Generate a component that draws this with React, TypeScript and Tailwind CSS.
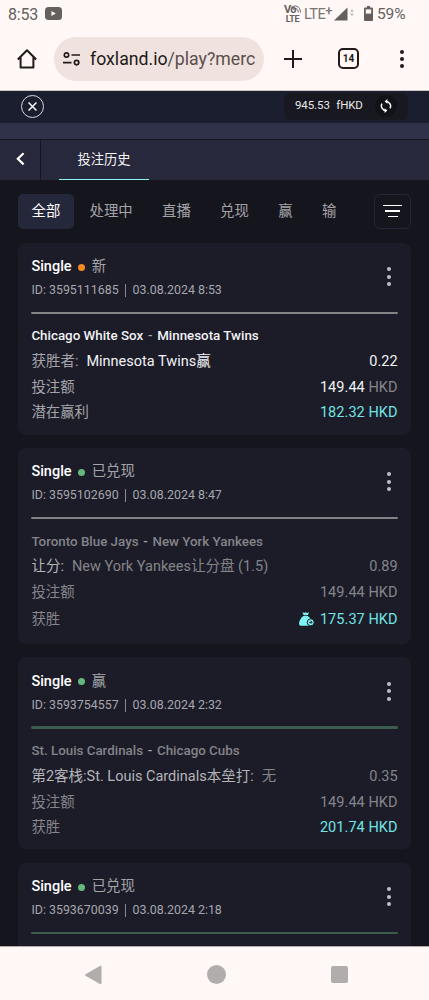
import React from "react";
import clsx from "clsx";

type Bet = {
  id: string;
  date: string;
  status: string;
  dot: string;
  line: string;
  details?: {
    teams: [string, string];
    market: string;
    pick: string;
    odds: string;
    payoutLabel: string;
    payout: string;
  };
  open?: boolean;
  cashout?: boolean;
};

const bets: Bet[] = [
  {
    id: "3595111685",
    date: "03.08.2024 8:53",
    status: "新",
    dot: "bg-[#f58a20]",
    line: "bg-[#838387]",
    details: {
      teams: ["Chicago White Sox", "Minnesota Twins"],
      market: "获胜者:",
      pick: "Minnesota Twins赢",
      odds: "0.22",
      payoutLabel: "潜在赢利",
      payout: "182.32",
    },
    open: true,
  },
  {
    id: "3595102690",
    date: "03.08.2024 8:47",
    status: "已兑现",
    dot: "bg-[#63b97c]",
    line: "bg-[#838387]",
    details: {
      teams: ["Toronto Blue Jays", "New York Yankees"],
      market: "让分:",
      pick: "New York Yankees让分盘 (1.5)",
      odds: "0.89",
      payoutLabel: "获胜",
      payout: "175.37",
    },
    cashout: true,
  },
  {
    id: "3593754557",
    date: "03.08.2024 2:32",
    status: "赢",
    dot: "bg-[#63b97c]",
    line: "bg-[#3b5c4c]",
    details: {
      teams: ["St. Louis Cardinals", "Chicago Cubs"],
      market: "第2客栈:St. Louis Cardinals本垒打:",
      pick: "无",
      odds: "0.35",
      payoutLabel: "获胜",
      payout: "201.74",
    },
  },
  {
    id: "3593670039",
    date: "03.08.2024 2:18",
    status: "已兑现",
    dot: "bg-[#63b97c]",
    line: "bg-[#3b5c4c]",
  },
];

const filters = ["处理中", "直播", "兑现", "赢", "输"];

function StatusBar() {
  return (
    <div className="flex h-7 items-center pl-2 text-[#655f5e]">
      <span className="w-[37px] pt-px text-[16px] leading-7 tracking-[-0.2px]">8:53</span>
      <svg className="-mt-px block" width="17" height="13" viewBox="0 0 17 13">
        <rect width="17" height="13" rx="3.5" fill="#655f5e" />
        <path d="M6.4 3.9v5.2l4.4-2.6z" fill="#fff8f6" />
      </svg>
      <div className="ml-[222px] flex w-[17px] flex-col items-center">
        <div className="flex h-[10px] items-end">
          <span className="text-[11px] font-bold leading-[10px] tracking-[-0.6px]">Vo</span>
          <svg width="5" height="10" viewBox="0 0 5 10" fill="none" stroke="#655f5e" strokeWidth="1" overflow="visible">
            <path d="M-5 2.6C-1-.6 4.4 1 4.4 7.5M-3 4.4C0 2.4 2.2 4 2.2 7.5" />
          </svg>
        </div>
        <span className="text-[9px] font-bold leading-[9px] tracking-[-0.3px]">LTE</span>
      </div>
      <span className="ml-[3px] flex w-[27px] whitespace-nowrap pt-[2px] text-[14.5px] tracking-[-0.5px] text-[#7a7473]">
        LTE<span className="-mt-[3px] text-[13px] font-medium">+</span>
      </span>
      <svg className="ml-[3px]" width="21" height="14" viewBox="0 0 21 14">
        <path d="M13.5.5v13H0z" fill="#655f5e" />
        <path d="M18 1.7l1.8 3h-3.6zM18 9.5l1.8-3h-3.6z" fill="#c3bcba" />
      </svg>
      <svg className="-mt-px ml-[9px]" width="9" height="15" viewBox="0 0 9 15">
        <path
          d="M3 0h3v1.5h2a1 1 0 0 1 1 1V14a1 1 0 0 1-1 1H1a1 1 0 0 1-1-1V2.5a1 1 0 0 1 1-1h2z"
          fill="#655f5e"
        />
        <path d="M1.8 3.4h5.4v4.2H1.8z" fill="#fff8f6" />
      </svg>
      <span className="ml-[4px] pt-px text-[15.5px] tracking-[-0.1px]">59%</span>
    </div>
  );
}

function BrowserBar() {
  return (
    <div className="flex h-[62px] items-center pl-[17px] pb-px">
      <svg width="20" height="21" viewBox="0 0 20 21" fill="none" stroke="#211a19" strokeWidth="2">
        <path d="M.8 11.5 10 2.2l9.2 9.3M3.6 9.6v10h12.8v-10" strokeLinejoin="round" />
      </svg>
      <div className="ml-[17px] flex h-11 w-[210px] items-center rounded-full bg-[#f0e2df] pl-[9px]">
        <svg width="17" height="14" viewBox="0 0 17 14" fill="none" stroke="#211a19" strokeWidth="1.7">
          <circle cx="3.5" cy="3" r="2.2" />
          <path d="M8.5 3H17M0 10.6h8.5" />
          <circle cx="13.6" cy="10.6" r="2.2" />
        </svg>
        <span className="ml-[10px] pt-px whitespace-nowrap text-[17.7px] leading-7 text-[#211a19]">
          foxland.io<span className="text-[#5a4e4c]">/play?merc</span>
        </span>
      </div>
      <svg className="ml-[20px]" width="18" height="18" viewBox="0 0 18 18" stroke="#211a19" strokeWidth="2">
        <path d="M9 0v18M0 9h18" />
      </svg>
      <div className="ml-[36px] flex h-[21px] w-[21px] items-center justify-center rounded-[5px] border-2 border-[#211a19] text-[10px] font-bold text-[#211a19]">
        14
      </div>
      <div className="ml-[41px] flex flex-col gap-[3px]">
        <i className="size-1 rounded-full bg-[#211a19]" />
        <i className="size-1 rounded-full bg-[#211a19]" />
        <i className="size-1 rounded-full bg-[#211a19]" />
      </div>
    </div>
  );
}

function SiteHeader() {
  return (
    <>
      <div className="flex h-8 items-center justify-between bg-[#1b1e2e] pl-[21px] pr-[21px]">
        <div className="-mt-[2px] flex size-[23px] items-center justify-center rounded-full border border-[#d8d9de]">
          <svg width="9" height="9" viewBox="0 0 10 10" stroke="#fff" strokeWidth="1.6">
            <path d="M.6.6l8.8 8.8M9.4.6L.6 9.4" />
          </svg>
        </div>
        <div className="-mt-[2px] flex h-[27px] w-[124px] items-center rounded-md bg-[#181820] pl-[11px] text-[11.5px] tracking-[-0.1px] text-[#e8e8ea]">
          <span>945.53</span>
          <span className="ml-[6.5px]">fHKD</span>
          <span className="ml-[12px] flex size-[22px] items-center justify-center rounded-full bg-[#111216]">
            <svg width="12" height="14" viewBox="0 0 12 14" fill="none" stroke="#fff" strokeWidth="1.5">
              <path d="M6 2.4A4.7 4.7 0 0 1 10 9.4M6 11.6A4.7 4.7 0 0 1 2 4.6" />
              <path d="M7.4 0v4.8L4.6 2.4zM4.6 14V9.2l2.8 2.4z" fill="#fff" stroke="none" />
            </svg>
          </span>
        </div>
      </div>
      <div className="h-4 bg-[#30324a]" />
      <div className="flex h-[41px] border-t border-[#15151e] bg-[#28283d]">
        <div className="flex w-[41px] items-center border-r border-[#15151e] pl-4 pb-[3px]">
          <svg width="9" height="14" viewBox="0 0 9 14" fill="none" stroke="#fff" strokeWidth="2.2">
            <path d="M7.6 1.2 1.8 6.8l5.8 5.6" />
          </svg>
        </div>
        <div className="ml-[18px] flex w-[90px] items-center justify-center border-b border-[#8ff3f3] pt-px text-[13.3px] text-[#f2f2f4]">
          投注历史
        </div>
      </div>
    </>
  );
}

function Filters() {
  return (
    <div className="mt-px flex h-[35px] items-center text-[14.4px] text-[#a3a3a8]">
      <div className="flex h-[35px] w-14 items-center justify-center rounded-[5px] bg-[#25273a] text-white">全部</div>
      <div className="ml-[15.5px] flex gap-[29.3px]">
        {filters.map((f) => (
          <span key={f}>{f}</span>
        ))}
      </div>
      <div className="ml-auto flex h-[35px] w-[37px] flex-col items-center justify-center gap-[4px] rounded-md border border-[#24253a] pb-px">
        <i className="h-[1.5px] w-[19px] bg-white" />
        <i className="h-[1.5px] w-[15px] bg-white" />
        <i className="h-[1.5px] w-[10px] bg-white" />
      </div>
    </div>
  );
}

function MoneyBag() {
  return (
    <svg className="mr-[5px] mb-[2px]" width="16" height="14" viewBox="0 0 16 14">
      <path d="M3.2.2l2 .7L6.7.2l1.5.7 2-.7-1.5 3h-4z" fill="#7df3f3" />
      <path d="M4.4 4h4.4c2.6 2 4 4.6 4 7.5 0 1.5-.8 2.3-2.2 2.3H2.3C.9 13.8 0 13 0 11.5 0 8.6 1.8 6 4.4 4z" fill="#7df3f3" />
      <circle cx="11.7" cy="10.3" r="3.5" fill="#7df3f3" stroke="#1b1c28" strokeWidth="1" />
      <path d="M9.8 10.3H13M11.6 8.7l1.6 1.6-1.6 1.6" fill="none" stroke="#1b1c28" strokeWidth=".9" />
    </svg>
  );
}

function BetCard({ bet }: { bet: Bet }) {
  const muted = bet.open ? "text-[#f2f2f4]" : "text-[#848489]";
  const d = bet.details;
  return (
    <div className="shrink-0 rounded-lg bg-[#1b1c28] px-[13.4px] pt-[12px] text-[14.5px] whitespace-nowrap">
      <div className="flex items-center justify-between">
        <div>
          <div className="flex h-[25px] items-center">
            <span className="font-medium text-white">Single</span>
            <i className={clsx("mx-[6.5px] size-[7px] rounded-full", bet.dot)} />
            <span className="text-[14.4px] text-[#a3a3a8]">{bet.status}</span>
          </div>
          <div className="flex h-[22px] items-center text-[12.4px] text-[#a6a6ac]">
            <span>ID: {bet.id}</span>
            <i className="mx-[6.5px] h-[13px] w-px bg-[#8a8a90]" />
            <span>{bet.date}</span>
          </div>
        </div>
        <div className="mr-[7px] mt-[-3px] flex flex-col gap-[3.4px]">
          <i className="size-1 rounded-full bg-[#c0c0c4]" />
          <i className="size-1 rounded-full bg-[#c0c0c4]" />
          <i className="size-1 rounded-full bg-[#c0c0c4]" />
        </div>
      </div>
      <div className={clsx("mt-[10px] mb-[11px] h-[2.5px] rounded-full", bet.line)} />
      {d ? (
        <>
          <div className={clsx("flex h-[23px] items-center gap-[4.7px] text-[13.35px] font-medium", muted)}>
            <span>{d.teams[0]}</span>
            <span className="text-[#a6a6ac]">-</span>
            <span>{d.teams[1]}</span>
          </div>
          <div className="flex h-[27px] items-center">
            <span className={clsx(bet.open ? "text-[#a3a3a8]" : "text-[#b4b4b9]")}>{d.market}</span>
            <span className={clsx("ml-2", muted)}>{d.pick}</span>
            <span className={clsx("ml-auto", muted)}>{d.odds}</span>
          </div>
          <div className="flex h-[25.5px] items-center justify-between text-[#85858a]">
            <span className={clsx("text-[14.4px]", bet.open && "text-[#a3a3a8]")}>投注额</span>
            <span className="tracking-[0.06px]">
              <span className={muted}>149.44</span> HKD
            </span>
          </div>
          <div
            className={clsx("flex items-center text-[#72e4e4]", bet.cashout ? "mb-[9.5px] h-[29px]" : "mb-[9px] h-[25px]")}
          >
            <span className={clsx("mr-auto text-[14.4px]", bet.open ? "text-[#a3a3a8]" : "text-[#85858a]")}>
              {d.payoutLabel}
            </span>
            {bet.cashout && <MoneyBag />}
            <span className="tracking-[0.06px]">{d.payout} HKD</span>
          </div>
        </>
      ) : (
        <div className="h-[110px]" />
      )}
    </div>
  );
}

function NavBar() {
  return (
    <div className="flex h-[54px] shrink-0 items-center border-t border-[#b5a8a6] bg-[#fff8f6] pl-[84px] pt-[2px]">
      <svg width="18" height="20" viewBox="0 0 18 20">
        <path d="M2 10 16.5 1.8v16.4z" fill="#b1adac" stroke="#b1adac" strokeWidth="2" strokeLinejoin="round" />
      </svg>
      <div className="ml-[105px] size-[19px] rounded-full bg-[#b1adac]" />
      <div className="ml-[105px] size-[17px] rounded-[2px] bg-[#b1adac]" />
    </div>
  );
}

export default function App() {
  return (
    <div className="flex h-[1000px] w-[429px] flex-col overflow-hidden bg-[#fff8f6] font-['Roboto','Noto_Sans_CJK_SC',sans-serif]">
      <StatusBar />
      <BrowserBar />
      <div className="flex min-h-0 flex-1 flex-col border-t border-[#d3c3c0] bg-[#15151e]">
        <SiteHeader />
        <div className="flex min-h-0 flex-1 flex-col overflow-hidden px-[18px] pt-[13px]">
          <Filters />
          <div className="mt-[13.5px] flex flex-col gap-[13.2px]">
            {bets.map((b) => (
              <BetCard key={b.id} bet={b} />
            ))}
          </div>
        </div>
      </div>
      <NavBar />
    </div>
  );
}
